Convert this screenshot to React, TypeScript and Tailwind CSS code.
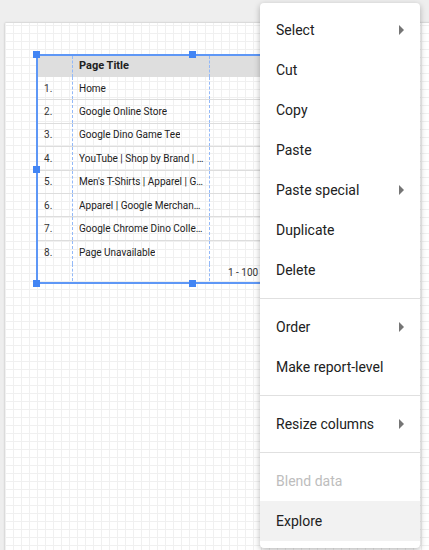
import { FC, ReactElement } from 'react';

interface IMenuItem {
  label: string;
  submenu?: boolean;
  disabled?: boolean;
  active?: boolean;
}

const rows: string[] = [
  'Home',
  'Google Online Store',
  'Google Dino Game Tee',
  'YouTube | Shop by Brand | Google Merchandise Store',
  "Men's T-Shirts | Apparel | Google Merchandise Store",
  'Apparel | Google Merchandise Store',
  'Google Chrome Dino Collectible Figurines',
  'Page Unavailable'
];

const menuGroups: IMenuItem[][] = [
  [
    { label: 'Select', submenu: true },
    { label: 'Cut' },
    { label: 'Copy' },
    { label: 'Paste' },
    { label: 'Paste special', submenu: true },
    { label: 'Duplicate' },
    { label: 'Delete' }
  ],
  [{ label: 'Order', submenu: true }, { label: 'Make report-level' }],
  [{ label: 'Resize columns', submenu: true }],
  [{ label: 'Blend data', disabled: true }, { label: 'Explore', active: true }]
];

const Handle: FC<{ className: string }> = ({ className }): ReactElement => (
  <div className={`absolute h-[7px] w-[7px] bg-[#4285f4] ${className}`} />
);

const TableChart: FC = (): ReactElement => {
  return (
    <div className="absolute left-[31px] top-[31px] h-[230px] w-[312px] border-2 border-[#5e97f6] text-[10px] text-[#212121]">
      <div className="flex h-[21px] items-center bg-[#dedede]">
        <div className="h-full w-[34px]" />
        <div className="flex h-full w-[137px] items-center border-l border-dashed border-[#93b9f8] pl-[6px] text-[11px] font-bold">
          Page Title
        </div>
        <div className="h-full flex-1 border-l border-dashed border-[#93b9f8]" />
      </div>
      {rows.map((title: string, index: number) => (
        <div
          key={title}
          className={`flex h-[23.4px] items-center ${index < rows.length - 1 ? 'border-b border-[#dddddd]' : ''}`}
        >
          <div className="w-[34px] pl-[6px] text-[#333]">{index + 1}.</div>
          <div className="flex h-full w-[137px] items-center border-l border-dashed border-[#93b9f8] pl-[6px] pr-[3px]">
            <span className="truncate">{title}</span>
          </div>
          <div className="h-full flex-1 border-l border-dashed border-[#93b9f8]" />
        </div>
      ))}
      <div className="flex h-[17px] items-center">
        <div className="h-full w-[34px]" />
        <div className="h-full w-[137px] border-l border-dashed border-[#93b9f8]" />
        <div className="flex h-full flex-1 items-center border-l border-dashed border-[#93b9f8] pl-[18px] text-[#333]">
          1 - 100 / 3425
        </div>
      </div>
      <Handle className="left-[-5px] top-[-5px]" />
      <Handle className="left-[151px] top-[-5px]" />
      <Handle className="left-[-5px] top-[110px]" />
      <Handle className="bottom-[-5px] left-[-5px]" />
      <Handle className="bottom-[-5px] left-[151px]" />
    </div>
  );
};

const ContextMenu: FC = (): ReactElement => {
  return (
    <div className="absolute left-[260px] top-[3px] w-[160px] rounded bg-white py-[7px] shadow-[0_2px_6px_rgba(0,0,0,0.28)]">
      {menuGroups.map((group: IMenuItem[], groupIndex: number) => (
        <div key={groupIndex}>
          {groupIndex > 0 && <div className="my-2 h-px bg-[#e0e0e0]" />}
          {group.map((item: IMenuItem) => (
            <div
              key={item.label}
              className={`flex h-10 items-center justify-between px-4 text-[14px] ${
                item.disabled ? 'text-[#bdbdbd]' : 'text-[#212121]'
              } ${item.active ? 'bg-[#f2f2f2]' : ''}`}
            >
              <span>{item.label}</span>
              {item.submenu && (
                <svg width="5" height="10" viewBox="0 0 5 10">
                  <path d="M0 0 L5 5 L0 10 Z" fill="#757575" />
                </svg>
              )}
            </div>
          ))}
        </div>
      ))}
    </div>
  );
};

const App: FC = (): ReactElement => {
  return (
    <div className="relative h-[550px] w-[429px] overflow-hidden bg-[#eeeeee] pl-[5px] pt-[23px] font-['Roboto',sans-serif]">
      <div className="relative h-[560px] w-[440px] bg-white bg-[linear-gradient(to_right,#f0f0f0_1px,transparent_1px),linear-gradient(to_bottom,#f0f0f0_1px,transparent_1px)] bg-[size:8px_8px] bg-[position:0_2px] shadow-[0_0_2px_rgba(0,0,0,0.25)]">
        <TableChart />
      </div>
      <ContextMenu />
    </div>
  );
};

export default App;
